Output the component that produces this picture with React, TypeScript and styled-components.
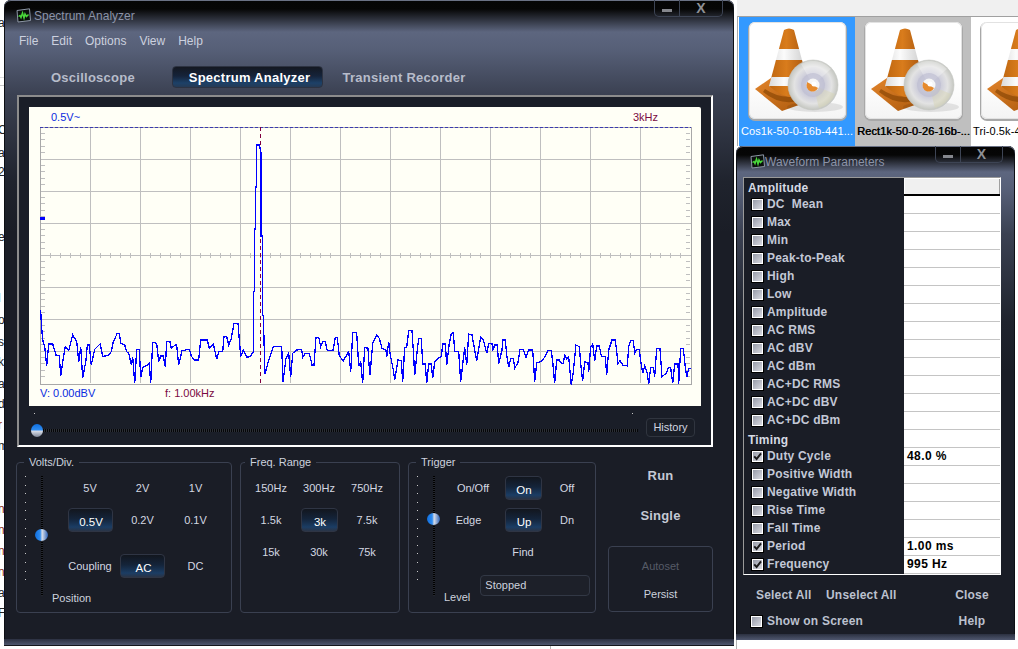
import styled, { createGlobalStyle } from "styled-components";

const GlobalStyle = createGlobalStyle`
  html, body {
    margin: 0;
    padding: 0;
    background: #fff;
  }
  * {
    box-sizing: border-box;
  }
`;

const uiFont = `"Liberation Sans", Arial, sans-serif`;

const Desktop = styled.div`
  position: relative;
  width: 1018px;
  height: 649px;
  overflow: hidden;
  background: #fff;
  font-family: ${uiFont};
`;

/* ---------- stuff behind the windows ---------- */

const Sliver = styled.span<{ $top: number; $color?: string }>`
  position: absolute;
  top: ${(p) => p.$top - 7}px;
  left: -2px;
  font-size: 12px;
  line-height: 14px;
  color: ${(p) => p.$color || "#222"};
`;

const SliverColumn = styled.div`
  position: absolute;
  left: 0;
  top: 0;
  width: 4px;
  height: 649px;
  overflow: hidden;
`;

const BackLine = styled.div<{ $top: number; $color: string }>`
  position: absolute;
  left: 0;
  top: ${(p) => p.$top}px;
  width: 4px;
  height: 1px;
  background: ${(p) => p.$color};
`;

const BackTick = styled.div<{ $left: number; $top: number }>`
  position: absolute;
  left: ${(p) => p.$left}px;
  top: ${(p) => p.$top}px;
  width: 1px;
  height: ${(p) => 649 - p.$top}px;
  background: #b4b4b4;
`;

/* ---------- window chrome ---------- */

const Window = styled.section<{ $left: number; $top: number; $width: number; $height: number; $slate: number }>`
  position: absolute;
  left: ${(p) => p.$left}px;
  top: ${(p) => p.$top}px;
  width: ${(p) => p.$width}px;
  height: ${(p) => p.$height}px;
  display: flex;
  flex-direction: column;
  overflow: hidden;
  border-radius: 7px 7px 0 0;
  box-shadow: inset 0 1px 0 #6a7184, inset 1px 0 0 #0d0f14, inset -1px 0 0 #0d0f14;
  background: linear-gradient(
    #050505 0,
    #060606 9px,
    #5d667f ${(p) => p.$slate}px,
    #565f77 ${(p) => p.$slate + 18}px,
    #3b4152 ${(p) => p.$slate + 62}px,
    #1f232d ${(p) => p.$slate + 150}px,
    #1a1d26 ${(p) => p.$slate + 200}px
  );
`;

const TitleBar = styled.header`
  display: flex;
  align-items: flex-start;
  height: 31px;
  flex: none;
`;

const AppIconBox = styled.svg<{ $left: number; $gap: number }>`
  width: 15px;
  height: 15px;
  margin: 8px ${(p) => p.$gap}px 0 ${(p) => p.$left}px;
  flex: none;
`;

const WindowTitle = styled.h1`
  margin: 9px 0 0;
  font-size: 12px;
  line-height: 15px;
  font-weight: 400;
  color: #8b93a8;
`;

const WindowControls = styled.div<{ $right: number }>`
  display: flex;
  height: 17px;
  margin-left: auto;
  margin-right: ${(p) => p.$right}px;
  border: 1px solid #3d4454;
  border-top: 0;
  border-radius: 0 0 5px 5px;
`;

const ControlButton = styled.div<{ $width: number; $divider?: boolean }>`
  width: ${(p) => p.$width}px;
  display: flex;
  align-items: center;
  justify-content: center;
  color: #8d8f95;
  ${(p) => (p.$divider ? "border-right: 1px solid #3d4454;" : "")}
`;

const MinimizeBar = styled.span`
  display: block;
  width: 10px;
  height: 3px;
  margin-top: 4px;
  background: #85878d;
`;

const CloseGlyph = styled.span`
  font-size: 14px;
  line-height: 14px;
  font-weight: 700;
`;

const BottomBand = styled.div`
  flex: none;
  margin-top: auto;
  height: 7px;
  background: linear-gradient(#2b3040, #4c546b 80%, #14161c 80%);
`;

/* ---------- menu and tabs ---------- */

const MenuBar = styled.nav`
  display: flex;
  gap: 13px;
  height: 20px;
  padding-left: 15px;
  align-items: center;
  flex: none;
`;

const MenuItem = styled.span`
  font-size: 12px;
  color: #ccd1df;
`;

const TabBar = styled.div`
  display: flex;
  align-items: center;
  height: 22px;
  margin-top: 15px;
  padding-left: 47px;
  flex: none;
`;

const Tab = styled.div<{ $width: number; $gap: number; $active?: boolean }>`
  width: ${(p) => p.$width}px;
  margin-right: ${(p) => p.$gap}px;
  height: 22px;
  line-height: 23px;
  text-align: center;
  white-space: nowrap;
  font-size: 13px;
  font-weight: 700;
  letter-spacing: 0.25px;
  color: ${(p) => (p.$active ? "#fff" : "#b7bcca")};
  ${(p) =>
    p.$active
      ? `
    padding-left: 4px;
    border: 1px solid #2d3342;
    border-radius: 4px;
    line-height: 22px;
    background: linear-gradient(#141821 0, #15233a 45%, #1d4168 80%, #253a55 100%);
  `
      : ""}
`;

/* ---------- scope display ---------- */

const ScopeFrame = styled.div`
  width: 696px;
  height: 352px;
  margin: 7px 0 0 13px;
  padding: 10px 10px 0;
  flex: none;
  background: #1a1e28;
  border: 2px solid;
  border-color: #8c8c8c #fff #fff #8c8c8c;
`;

const ScreenPanel = styled.div`
  width: 672px;
  height: 299px;
  padding: 0 0 0 11px;
  background: #fffff6;
  border-radius: 0 2px 0 0;
`;

const ScreenTopLabels = styled.div`
  display: flex;
  justify-content: space-between;
  align-items: center;
  height: 20px;
  padding: 0 43px 0 11px;
`;

const ScreenBottomLabels = styled.div`
  display: flex;
  align-items: center;
  height: 16px;
`;

const Readout = styled.span<{ $tone: "volt" | "freq"; $width?: number }>`
  display: inline-block;
  width: ${(p) => (p.$width ? `${p.$width}px` : "auto")};
  font-size: 11px;
  line-height: 14px;
  color: ${(p) => (p.$tone === "volt" ? "#0a2be0" : "#7a0a42")};
`;

const PlotSvg = styled.svg`
  display: block;
  width: 652px;
  height: 258px;
`;

const HistoryRow = styled.div`
  display: flex;
  align-items: flex-start;
  margin-top: 10px;
  height: 24px;
`;

const HSlider = styled.div`
  position: relative;
  width: 607px;
  height: 24px;
  margin-left: 2px;
`;

const HTrack = styled.div`
  position: absolute;
  left: 6px;
  right: 0;
  top: 13px;
  height: 3px;
  background: repeating-linear-gradient(90deg, #050608 0 1px, #2c2f36 1px 2px);
`;

const HThumb = styled.div`
  position: absolute;
  left: 0;
  top: 8px;
  width: 12px;
  height: 13px;
  border-radius: 50%;
  background: linear-gradient(#0f6fe0 0, #2f8cf0 45%, #d8dde8 55%, #7f8798 100%);
`;

const EndDot = styled.span<{ $left: number }>`
  position: absolute;
  left: ${(p) => p.$left}px;
  top: -3px;
  width: 1px;
  height: 1px;
  background: #c8c8c8;
`;

const HistoryButton = styled.div`
  width: 49px;
  height: 19px;
  margin: 2px 0 0 8px;
  border: 1px solid #30353f;
  border-radius: 4px;
  background: #1a1e27;
  color: #d2d6e0;
  font-size: 11px;
  line-height: 17px;
  text-align: center;
`;

/* ---------- lower control groups ---------- */

const ControlRow = styled.div`
  display: flex;
  gap: 8px;
  margin: 15px 0 0 12px;
  flex: none;
`;

const GroupBox = styled.div<{ $width: number }>`
  position: relative;
  display: flex;
  width: ${(p) => p.$width}px;
  height: 151px;
  padding: 9px 0 0 8px;
  border: 1px solid #3a4050;
  border-radius: 4px;
`;

const GroupLegend = styled.span<{ $left: number }>`
  position: absolute;
  left: ${(p) => p.$left}px;
  top: -8px;
  padding: 0 5px;
  background: #1a1d26;
  font-size: 11px;
  line-height: 14px;
  color: #cdd2de;
`;

const VSlider = styled.div`
  position: relative;
  flex: none;
  width: 27px;
  height: 120px;
  margin-top: 4px;
`;

const VTicks = styled.div`
  position: absolute;
  left: 0;
  top: 0;
  width: 1px;
  height: 112px;
  background: repeating-linear-gradient(#c8c8c8 0 1px, transparent 1px 8.6px);
`;

const VTrack = styled.div`
  position: absolute;
  left: 16px;
  top: 0;
  width: 2px;
  height: 120px;
  background: repeating-linear-gradient(#000 0 1px, #24272e 1px 2px);
`;

const VThumb = styled.div<{ $top: number }>`
  position: absolute;
  left: 10px;
  top: ${(p) => p.$top}px;
  width: 13px;
  height: 12px;
  border-radius: 50%;
  background: linear-gradient(90deg, #0f6fe0 0, #2f8cf0 40%, #d8dde8 55%, #2b62b8 100%);
`;

const GroupColumn = styled.div`
  display: flex;
  flex-direction: column;
  flex: 1;
  min-width: 0;
`;

const OptionGrid = styled.div<{ $columns: string; $indent: number }>`
  display: grid;
  grid-template-columns: ${(p) => p.$columns};
  grid-auto-rows: 32px;
  margin-left: ${(p) => p.$indent}px;
  justify-items: center;
  align-items: center;
`;

const Option = styled.span<{ $active?: boolean; $width?: number; $nudge?: number }>`
  display: block;
  margin-right: ${(p) => p.$nudge || 0}px;
  text-align: center;
  white-space: nowrap;
  font-size: ${(p) => (p.$active ? "11.5px" : "11px")};
  color: #d4d8e2;
  ${(p) =>
    p.$active
      ? `
    width: ${p.$width}px;
    height: 24px;
    padding: 2px 0 0 2px;
    line-height: 22px;
    color: #fff;
    border: 1px solid #2f3544;
    border-radius: 4px;
    background: linear-gradient(#12161e 0, #14243a 45%, #1b3d64 82%, #2a3446 100%);
  `
      : ""}
`;

const SmallLabel = styled.span<{ $top?: number }>`
  display: block;
  margin-top: ${(p) => p.$top || 0}px;
  font-size: 11px;
  line-height: 14px;
  color: #cdd2de;
`;

const CouplingRow = styled.div`
  display: grid;
  grid-template-columns: 52px 53px 53px;
  justify-items: center;
  align-items: center;
  height: 32px;
  margin: 14px 0 0 12px;
`;

const TriggerFoot = styled.div`
  display: flex;
  align-items: flex-end;
  gap: 10px;
  height: 29px;
  margin-top: 7px;
`;

const StatusField = styled.div`
  align-self: flex-start;
  width: 110px;
  height: 21px;
  padding-left: 4px;
  border: 1px solid #323845;
  border-radius: 4px;
  background: #1d2029;
  color: #cdd2de;
  font-size: 11px;
  line-height: 19px;
`;

const ActionColumn = styled.div`
  display: flex;
  flex-direction: column;
  width: 105px;
  margin-left: 4px;
  text-align: center;
`;

const RunButton = styled.div<{ $top: number }>`
  margin-top: ${(p) => p.$top}px;
  height: 26px;
  line-height: 26px;
  font-size: 13px;
  font-weight: 700;
  letter-spacing: 0.2px;
  color: #c5c9d4;
`;

const ActionBox = styled.div`
  height: 66px;
  margin-top: 17px;
  padding-top: 5px;
  border: 1px solid #3a4050;
  border-radius: 4px;
`;

const ActionItem = styled.div<{ $disabled?: boolean }>`
  height: 28px;
  line-height: 28px;
  font-size: 11px;
  color: ${(p) => (p.$disabled ? "#565b67" : "#cdd2de")};
`;

/* ---------- file thumbnails ---------- */

const Explorer = styled.div`
  position: absolute;
  left: 737px;
  top: 0;
  width: 281px;
  height: 146px;
  background: #f0f0f0;
  padding-top: 16px;
`;

const TileStrip = styled.div`
  display: flex;
  height: 130px;
  padding-left: 1px;
  border-top: 1px solid #a0a0a0;
  border-left: 1px solid #a8a8a8;
  background: #fff;
  overflow: hidden;
`;

const Tile = styled.div<{ $state: "selected" | "inactive" | "plain" }>`
  flex: none;
  width: 116px;
  padding: 5px 0 0 10px;
  background: ${(p) => (p.$state === "selected" ? "#3399ff" : p.$state === "inactive" ? "#bfbfbf" : "#fff")};
  color: ${(p) => (p.$state === "selected" ? "#fff" : "#000")};
`;

const ThumbCard = styled.div`
  width: 97px;
  height: 97px;
  border-radius: 6px;
  background: linear-gradient(#fff 60%, #f4f4f4);
  box-shadow: inset 0 0 0 1px #e2e2e2, 0 1px 0 1px #a8a8a8;
`;

const TileLabel = styled.div<{ $heavy?: boolean }>`
  margin: 5px 0 0 -8px;
  width: 116px;
  font-size: 11px;
  line-height: 15px;
  letter-spacing: 0.1px;
  white-space: nowrap;
  ${(p) => (p.$heavy ? "text-shadow: 0.5px 0 0 #000;" : "")}
`;

/* ---------- waveform parameters table ---------- */

const ParamTable = styled.div`
  width: 258px;
  margin-left: 7px;
  flex: none;
  border: 1px solid;
  border-color: #9a9a9a #fff #fff #9a9a9a;
`;

const ParamRow = styled.div`
  display: grid;
  grid-template-columns: 160px 96px;
  height: 18px;
`;

const ParamName = styled.div<{ $section?: boolean }>`
  display: flex;
  align-items: center;
  gap: 3px;
  padding-left: ${(p) => (p.$section ? 4 : 7)}px;
  padding-bottom: ${(p) => (p.$section ? 0 : 2)}px;
  padding-top: ${(p) => (p.$section ? 1 : 0)}px;
  background: #1a1d26;
  font-size: 12px;
  font-weight: 700;
  letter-spacing: 0.2px;
  white-space: pre;
  color: ${(p) => (p.$section ? "#d6dae4" : "#c3c8d6")};
`;

const ParamValue = styled.div<{ $header?: boolean }>`
  padding-left: 3px;
  background: ${(p) => (p.$header ? "#f0f0f0" : "#fff")};
  border-bottom: ${(p) => (p.$header ? "2px solid #000" : "1px solid #c4c4c4")};
  ${(p) => (p.$header ? "box-shadow: inset 1px 1px 0 #fff, inset -1px 0 0 #a0a0a0;" : "")}
  font-size: 12px;
  line-height: 17px;
  font-weight: 700;
  letter-spacing: 0.4px;
  color: #000;
`;

const CheckBox = styled.span`
  flex: none;
  display: flex;
  align-items: center;
  justify-content: center;
  width: 13px;
  height: 13px;
  border: 1px solid #000;
  background: linear-gradient(135deg, #8f94a2, #dfe0e6);
  box-shadow: inset 0 0 0 1px #fff;
`;

const ParamFooter = styled.div<{ $top?: number }>`
  display: flex;
  align-items: center;
  height: 26px;
  margin-top: ${(p) => p.$top || 0}px;
  padding: 0 13px 0 20px;
  flex: none;
  font-size: 12px;
  font-weight: 700;
  letter-spacing: 0.2px;
  color: #bcc1cf;
`;

const FooterAction = styled.span<{ $width?: number }>`
  width: ${(p) => (p.$width ? `${p.$width}px` : "auto")};
  white-space: nowrap;
`;

const FooterEnd = styled.span`
  margin-left: auto;
  width: 60px;
  text-align: center;
`;

const ShowOnScreen = styled.span`
  display: flex;
  align-items: center;
  gap: 4px;
  margin-left: -6px;
`;

/* ---------- drawings ---------- */

function AppIcon({ left, gap }: { left: number; gap: number }) {
  return (
    <AppIconBox $left={left} $gap={gap} viewBox="0 0 15 15">
      <path d="M1 2.5 13.5 0.8 14.5 12.5 2 14Z" fill="#0a0f0c" stroke="#8f98a8" strokeWidth="1" />
      <path
        d="M2.5 8.5 4 7.5 5 9.5 6.5 5 8 10 9 6 10.5 8.5 12.5 6.5"
        fill="none"
        stroke="#49d63a"
        strokeWidth="1.5"
      />
    </AppIconBox>
  );
}

const HiddenDefs = styled.svg`
  position: absolute;
  width: 0;
  height: 0;
`;

function ConeDefs() {
  return (
    <HiddenDefs aria-hidden="true">
      <defs>
        <linearGradient id="coneBand" x1="0" x2="1" y1="0" y2="0">
          <stop offset="0" stopColor="#b55f0c" />
          <stop offset="0.45" stopColor="#d97c1c" />
          <stop offset="1" stopColor="#96490a" />
        </linearGradient>
        <linearGradient id="coneWhite" x1="0" x2="1" y1="0" y2="0">
          <stop offset="0" stopColor="#cfcfcf" />
          <stop offset="0.4" stopColor="#fbfbfb" />
          <stop offset="1" stopColor="#bdbdbd" />
        </linearGradient>
        <linearGradient id="coneBase" x1="0" x2="1" y1="0" y2="1">
          <stop offset="0" stopColor="#e2842a" />
          <stop offset="1" stopColor="#a9570c" />
        </linearGradient>
        <radialGradient id="discFace" cx="0.5" cy="0.5" r="0.5">
          <stop offset="0" stopColor="#e6e6ee" />
          <stop offset="0.5" stopColor="#cfcfdb" />
          <stop offset="0.75" stopColor="#e3e3e3" />
          <stop offset="1" stopColor="#c4c6c0" />
        </radialGradient>
        <clipPath id="coneClip">
          <path d="M35 8Q40 5 45 8L62 72Q40 82 20 64Z" />
        </clipPath>
      </defs>
    </HiddenDefs>
  );
}

function ConeIcon() {
  return (
    <svg width="97" height="97" viewBox="0 0 97 97">
      <path d="M6 67 22 56 62 62 64 78 33 89Z" fill="url(#coneBase)" />
      <path d="M16 67Q38 82 62 68L62 74Q36 88 14 70Z" fill="#8a4706" opacity="0.7" />
      <g clipPath="url(#coneClip)">
        <rect x="15" y="4" width="50" height="23" fill="url(#coneBand)" />
        <rect x="15" y="27" width="50" height="14" fill="url(#coneWhite)" />
        <rect x="15" y="38" width="50" height="18" fill="url(#coneBand)" />
        <rect x="15" y="55" width="50" height="10" fill="url(#coneWhite)" />
        <rect x="15" y="64" width="50" height="18" fill="url(#coneBand)" />
      </g>
      <ellipse cx="66" cy="85" rx="28" ry="5" fill="#000" opacity="0.09" />
      <circle cx="64" cy="63" r="25" fill="url(#discFace)" stroke="#c4c6c2" strokeWidth="0.6" />
      <path d="M64 63 52 42A24 24 0 0 1 82 47Z" fill="#fff" opacity="0.3" />
      <path d="M64 63 86 72A24 24 0 0 1 70 86Z" fill="#d7d4b4" opacity="0.45" />
      <circle cx="64" cy="63" r="12" fill="#b9b9cf" opacity="0.6" />
      <circle cx="64" cy="63" r="6.5" fill="#f6f6f6" />
      <path d="M58 60 69 66A6 6 0 0 1 58 61Z" fill="#e68a2c" />
      <circle cx="65" cy="62" r="2.5" fill="#fff" />
    </svg>
  );
}

function Check() {
  return (
    <svg width="9" height="9" viewBox="0 0 9 9">
      <path d="M1.2 4.4 3.6 7 8 1.4" fill="none" stroke="#1a1a1a" strokeWidth="2" />
    </svg>
  );
}

/* trace samples, read off the screen at 3x, split at the carrier peak */
const leftNoise: number[][] = [
  [122, 60], [124, 100], [128, 150], [134, 170], [140, 228], [146, 162], [158, 162], [168, 195], [178, 198],
  [182, 258], [190, 205], [196, 170], [206, 182], [218, 135], [230, 155], [236, 215], [242, 170], [248, 265],
  [258, 210], [262, 165], [268, 165], [274, 225], [284, 178], [300, 162], [304, 178], [308, 200], [326, 195],
  [334, 185], [340, 155], [352, 130], [358, 130], [362, 160], [374, 165], [380, 185], [386, 190], [394, 225],
  [398, 202], [404, 280], [410, 178], [418, 178], [422, 262], [428, 232], [444, 225], [448, 220], [452, 280],
  [458, 157], [470, 160], [476, 215], [482, 198], [490, 198], [496, 230], [500, 155], [510, 155], [514, 175],
  [526, 165], [530, 165], [536, 225], [546, 182], [568, 178], [574, 198], [582, 210], [596, 210], [602, 150],
  [622, 150], [628, 175], [640, 162], [650, 208], [656, 185], [668, 185], [672, 140], [680, 140], [686, 165],
  [694, 145], [702, 100], [714, 100], [722, 200], [730, 180], [740, 202], [750, 200], [760, 185],
];

const peak: number[][] = [
  [253.3, 351.7], [253.3, 291.7], [254.3, 291.7], [254.3, 229], [255.3, 229], [255.3, 187], [256.3, 187],
  [256.3, 145], [259.5, 145], [261, 153], [261, 236], [262.3, 236], [262.3, 315],
];

const middleNoise: number[][] = [
  [790, 78], [795, 252], [804, 218], [810, 200], [820, 170], [845, 170], [849, 275], [858, 205], [866, 190],
  [872, 262], [878, 190], [890, 180], [905, 178], [908, 202], [916, 190], [928, 190], [936, 225], [942, 225],
  [948, 142], [956, 142], [962, 170], [968, 155], [976, 155], [982, 182], [1000, 180], [1006, 142], [1012, 142],
  [1018, 198], [1030, 212], [1046, 185], [1052, 245], [1058, 128], [1070, 128], [1076, 228], [1082, 215],
  [1088, 280], [1094, 172], [1104, 175], [1108, 235],
];

const rightNoise: number[][] = [
  [0, 255], [8, 160], [20, 135], [28, 145], [36, 175], [48, 180], [50, 200], [56, 155], [60, 190], [70, 240],
  [74, 270], [84, 210], [94, 212], [98, 275], [104, 172], [110, 172], [116, 122], [126, 122], [130, 180],
  [134, 255], [142, 180], [146, 145], [154, 145], [158, 222], [166, 222], [170, 280], [176, 222], [184, 222],
  [188, 265], [194, 215], [204, 205], [214, 200], [218, 162], [226, 162], [230, 225], [238, 160], [244, 130],
  [250, 128], [254, 185], [266, 185], [272, 275], [284, 172], [290, 225], [296, 132], [306, 135], [314, 180],
  [320, 212], [332, 142], [340, 148], [350, 190], [356, 160], [366, 160], [368, 182], [374, 165], [382, 165],
  [386, 222], [396, 180], [398, 150], [406, 150], [410, 195], [416, 232], [422, 205], [430, 205], [434, 235],
  [444, 218], [450, 178], [460, 178], [468, 202], [476, 180], [488, 180], [494, 275], [500, 218], [510, 216],
  [520, 208], [534, 182], [544, 182], [548, 215], [554, 280], [560, 210], [568, 210], [574, 220], [580, 220],
  [584, 196], [590, 206], [596, 200], [600, 245], [604, 285], [610, 245], [618, 165], [628, 170], [634, 240],
  [638, 272], [644, 215], [654, 218], [656, 245], [662, 170], [668, 162], [674, 212], [680, 168], [688, 168],
  [694, 198], [706, 200], [710, 255], [716, 180], [726, 150], [736, 150], [744, 220], [750, 212], [758, 225],
  [772, 228], [776, 170], [782, 152], [790, 152], [794, 190], [800, 178], [808, 180], [814, 225], [818, 250],
  [824, 228], [832, 250], [836, 282], [842, 232], [850, 232], [854, 260], [860, 175], [870, 175], [876, 260],
  [888, 250], [896, 232], [902, 234], [908, 280], [914, 222], [924, 222], [926, 282], [932, 175], [940, 175],
  [946, 230], [950, 262], [956, 236], [964, 236],
];

const plotX = 40;
const plotY = 127;

const fromZoom = (pts: number[][], originX: number) =>
  pts.map(([x, y]) => [originX + x / 3 - plotX, 290 + y / 3 - plotY]);

const tracePoints = [
  ...fromZoom(leftNoise, 0),
  ...peak.map(([x, y]) => [x - plotX, y - plotY]),
  ...fromZoom(middleNoise, 0),
  ...fromZoom(rightNoise, 370),
]
  .map(([x, y]) => `${x.toFixed(1)},${y.toFixed(1)}`)
  .join(" ");

function SpectrumPlot() {
  const verticals = Array.from({ length: 12 }, (_, i) => 50.5 + i * 50);
  const horizontals = [32.5, 64.5, 96.5, 128.5, 160.5, 192.5, 224.5];
  const sideTicks = Array.from({ length: 39 }, (_, i) => 6.5 + i * 6.4);
  const centerTicks = Array.from({ length: 65 }, (_, i) => 10.5 + i * 10).filter((x) => (x - 0.5) % 50 !== 0);

  return (
    <PlotSvg viewBox="0 0 652 258" shapeRendering="crispEdges">
      <g stroke="#bfbfbf" strokeWidth="1">
        {verticals.map((x) => (
          <line key={x} x1={x} x2={x} y1="0" y2="256" />
        ))}
        {horizontals.map((y) => (
          <line key={y} x1="0" x2="651" y1={y} y2={y} />
        ))}
        {sideTicks.map((y) => (
          <line key={y} x1="1" x2="5" y1={y} y2={y} />
        ))}
        {sideTicks.map((y) => (
          <line key={`r${y}`} x1="646" x2="650" y1={y} y2={y} />
        ))}
        {centerTicks.map((x) => (
          <line key={x} x1={x} x2={x} y1="126" y2="131" />
        ))}
      </g>
      <path d="M0 0H651.5V258H0Z" fill="none" stroke="#a8a8a8" strokeWidth="2" />
      <line x1="0" x2="651" y1="0.5" y2="0.5" stroke="#3a3ab0" strokeWidth="1" strokeDasharray="3 2" />
      <line x1="220.5" x2="220.5" y1="0" y2="256" stroke="#800040" strokeWidth="1.4" strokeDasharray="4 3" />
      <rect x="0" y="90" width="5" height="3" fill="#0000ff" />
      <polyline points={tracePoints} fill="none" stroke="#0000ff" strokeWidth="1.3" />
    </PlotSvg>
  );
}

/* ---------- data ---------- */

const amplitudeRows = [
  "DC  Mean", "Max", "Min", "Peak-to-Peak", "High", "Low", "Amplitude", "AC RMS", "AC dBV", "AC dBm",
  "AC+DC RMS", "AC+DC dBV", "AC+DC dBm",
];

const timingRows: { name: string; value?: string }[] = [
  { name: "Duty Cycle", value: "48.0 %" },
  { name: "Positive Width" },
  { name: "Negative Width" },
  { name: "Rise Time" },
  { name: "Fall Time" },
  { name: "Period", value: "1.00 ms" },
  { name: "Frequency", value: "995 Hz" },
];

const slivers: [number, string, string?][] = [
  [23, "a"], [130, "C"], [153, "a"], [172, "2"], [237, "e"], [298, "l"], [320, "o"], [342, "s"], [362, "k"],
  [384, "a"], [404, "d"], [425, "r", "#a03a20"], [446, "m"], [509, "n", "#8a2a20"], [530, "n", "#8a2a20"],
  [551, "n", "#8a2a20"], [572, "n", "#8a2a20"], [593, "a"], [613, "F"],
];

function ParamCheckRow({ name, value }: { name: string; value?: string }) {
  return (
    <ParamRow>
      <ParamName>
        <CheckBox>{value ? <Check /> : null}</CheckBox>
        {name}
      </ParamName>
      <ParamValue>{value}</ParamValue>
    </ParamRow>
  );
}

export default function App() {
  return (
    <Desktop>
      <GlobalStyle />
      <ConeDefs />

      <SliverColumn>
        {slivers.map(([top, glyph, color]) => (
          <Sliver key={top} $top={top} $color={color}>
            {glyph}
          </Sliver>
        ))}
      </SliverColumn>
      <BackLine $top={77} $color="#dedede" />
      <BackLine $top={85} $color="#c8c8c8" />
      <BackTick $left={550} $top={646} />
      <BackTick $left={736} $top={640} />

      <Explorer>
        <TileStrip>
          <Tile $state="selected">
            <ThumbCard>
              <ConeIcon />
            </ThumbCard>
            <TileLabel>Cos1k-50-0-16b-441...</TileLabel>
          </Tile>
          <Tile $state="inactive">
            <ThumbCard>
              <ConeIcon />
            </ThumbCard>
            <TileLabel $heavy>Rect1k-50-0-26-16b-...</TileLabel>
          </Tile>
          <Tile $state="plain">
            <ThumbCard>
              <ConeIcon />
            </ThumbCard>
            <TileLabel>Tri-0.5k-4</TileLabel>
          </Tile>
        </TileStrip>
      </Explorer>

      <Window $left={4} $top={0} $width={730} $height={646} $slate={32}>
        <TitleBar>
          <AppIcon left={12} gap={3} />
          <WindowTitle>Spectrum Analyzer</WindowTitle>
          <WindowControls $right={11}>
            <ControlButton $width={25} $divider>
              <MinimizeBar />
            </ControlButton>
            <ControlButton $width={42}>
              <CloseGlyph>X</CloseGlyph>
            </ControlButton>
          </WindowControls>
        </TitleBar>

        <MenuBar>
          <MenuItem>File</MenuItem>
          <MenuItem>Edit</MenuItem>
          <MenuItem>Options</MenuItem>
          <MenuItem>View</MenuItem>
          <MenuItem>Help</MenuItem>
        </MenuBar>

        <TabBar>
          <Tab $width={82} $gap={39}>Oscilloscope</Tab>
          <Tab $width={151} $gap={19} $active>Spectrum Analyzer</Tab>
          <Tab $width={124} $gap={0}>Transient Recorder</Tab>
        </TabBar>

        <ScopeFrame>
          <ScreenPanel>
            <ScreenTopLabels>
              <Readout $tone="volt">0.5V~</Readout>
              <Readout $tone="freq">3kHz</Readout>
            </ScreenTopLabels>
            <SpectrumPlot />
            <ScreenBottomLabels>
              <Readout $tone="volt" $width={125}>V: 0.00dBV</Readout>
              <Readout $tone="freq">f: 1.00kHz</Readout>
            </ScreenBottomLabels>
          </ScreenPanel>
          <HistoryRow>
            <HSlider>
              <EndDot $left={3} />
              <EndDot $left={601} />
              <HTrack />
              <HThumb />
            </HSlider>
            <HistoryButton>History</HistoryButton>
          </HistoryRow>
        </ScopeFrame>

        <ControlRow>
          <GroupBox $width={216}>
            <GroupLegend $left={7}>Volts/Div.</GroupLegend>
            <VSlider>
              <VTicks />
              <VTrack />
              <VThumb $top={53} />
            </VSlider>
            <GroupColumn>
              <OptionGrid $columns="52px 53px 53px" $indent={12}>
                <Option>5V</Option>
                <Option>2V</Option>
                <Option>1V</Option>
                <Option $active $width={45}>0.5V</Option>
                <Option>0.2V</Option>
                <Option>0.1V</Option>
              </OptionGrid>
              <CouplingRow>
                <Option>Coupling</Option>
                <Option $active $width={45}>AC</Option>
                <Option>DC</Option>
              </CouplingRow>
              <SmallLabel $top={9}>Position</SmallLabel>
            </GroupColumn>
          </GroupBox>

          <GroupBox $width={160}>
            <GroupLegend $left={4}>Freq. Range</GroupLegend>
            <OptionGrid $columns="48px 48px 48px" $indent={-2}>
              <Option>150Hz</Option>
              <Option>300Hz</Option>
              <Option>750Hz</Option>
              <Option>1.5k</Option>
              <Option $active $width={37}>3k</Option>
              <Option>7.5k</Option>
              <Option>15k</Option>
              <Option>30k</Option>
              <Option>75k</Option>
            </OptionGrid>
          </GroupBox>

          <GroupBox $width={188}>
            <GroupLegend $left={7}>Trigger</GroupLegend>
            <VSlider>
              <VTicks />
              <VTrack />
              <VThumb $top={37} />
            </VSlider>
            <GroupColumn>
              <OptionGrid $columns="58px 42px 46px" $indent={0}>
                <Option>On/Off</Option>
                <Option $active $width={37}>On</Option>
                <Option>Off</Option>
                <Option $nudge={9}>Edge</Option>
                <Option $active $width={37}>Up</Option>
                <Option>Dn</Option>
                <span />
                <Option>Find</Option>
                <span />
              </OptionGrid>
              <TriggerFoot>
                <SmallLabel>Level</SmallLabel>
                <StatusField>Stopped</StatusField>
              </TriggerFoot>
            </GroupColumn>
          </GroupBox>

          <ActionColumn>
            <RunButton $top={1}>Run</RunButton>
            <RunButton $top={14}>Single</RunButton>
            <ActionBox>
              <ActionItem $disabled>Autoset</ActionItem>
              <ActionItem>Persist</ActionItem>
            </ActionBox>
          </ActionColumn>
        </ControlRow>

        <BottomBand />
      </Window>

      <Window $left={736} $top={146} $width={279} $height={494} $slate={26}>
        <TitleBar>
          <AppIcon left={14} gap={0} />
          <WindowTitle>Waveform Parameters</WindowTitle>
          <WindowControls $right={12}>
            <ControlButton $width={25} $divider>
              <MinimizeBar />
            </ControlButton>
            <ControlButton $width={41}>
              <CloseGlyph>X</CloseGlyph>
            </ControlButton>
          </WindowControls>
        </TitleBar>

        <ParamTable>
          <ParamRow>
            <ParamName $section>Amplitude</ParamName>
            <ParamValue $header />
          </ParamRow>
          {amplitudeRows.map((name) => (
            <ParamCheckRow key={name} name={name} />
          ))}
          <ParamRow>
            <ParamName $section>Timing</ParamName>
            <ParamValue />
          </ParamRow>
          {timingRows.map((row) => (
            <ParamCheckRow key={row.name} name={row.name} value={row.value} />
          ))}
        </ParamTable>

        <ParamFooter $top={7}>
          <FooterAction $width={70}>Select All</FooterAction>
          <FooterAction>Unselect All</FooterAction>
          <FooterEnd>Close</FooterEnd>
        </ParamFooter>
        <ParamFooter>
          <ShowOnScreen>
            <CheckBox />
            Show on Screen
          </ShowOnScreen>
          <FooterEnd>Help</FooterEnd>
        </ParamFooter>

        <BottomBand />
      </Window>
    </Desktop>
  );
}
